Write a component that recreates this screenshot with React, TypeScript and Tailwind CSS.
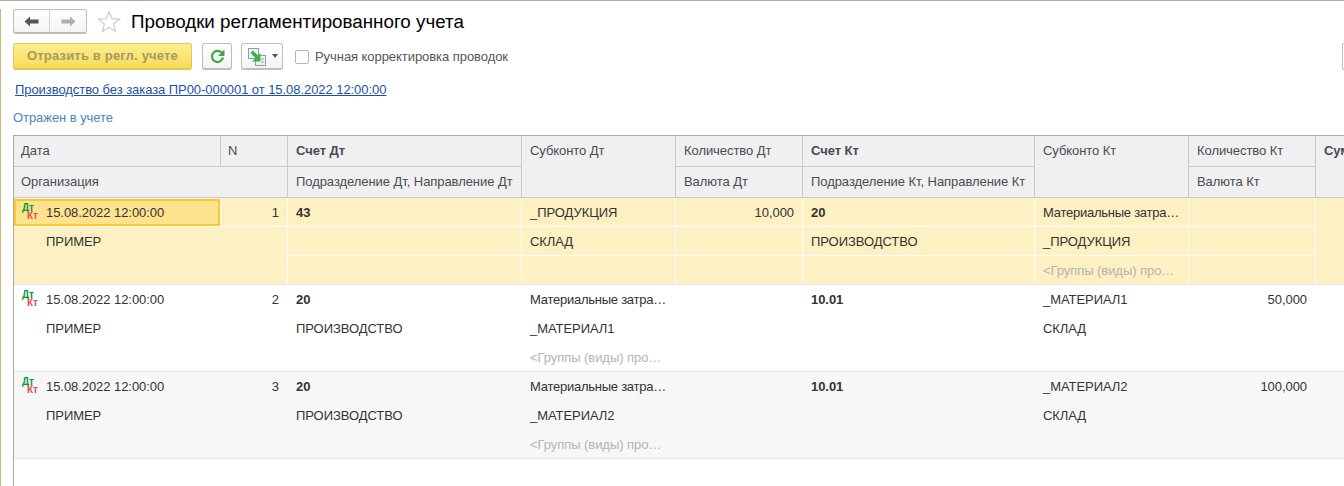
const GRID = 'grid grid-cols-[206px_66px_233px_153px_126px_231px_153px_126px_1fr] gap-x-px'

function DtKt({ inset }: { inset?: boolean }) {
  return (
    <span className={`absolute flex w-[20px] flex-col text-[10px] font-bold leading-[8px] tracking-normal ${inset ? 'left-[6px] top-[3px]' : 'left-[8px] top-[6px]'}`}>
      <span className="text-[#009a44]">Дт</span>
      <span className="pl-[5px] text-[#e2504a]">Кт</span>
    </span>
  )
}

function Arrow({ color, flip }: { color: string; flip?: boolean }) {
  return (
    <svg width="15" height="11" viewBox="0 0 15 11" className={flip ? 'rotate-180' : ''}>
      <path d="M0.5 5.5 L6 0.5 V3.5 H14.5 V7.5 H6 V10.5 Z" fill={color} />
    </svg>
  )
}

function HeadCell({ text, bold, className = '' }: { text: string; bold?: boolean; className?: string }) {
  return (
    <div className={`h-[30px] overflow-hidden whitespace-nowrap bg-[#f0f0f0] leading-[29px] text-[#4b4b55] ${bold ? 'font-bold' : ''} ${className || 'pl-[8px]'}`}>
      {text}
    </div>
  )
}

type Row = {
  n: number
  debit: string
  division: string
  sub1: string
  sub2: string
  sub3: string
  qtyDt: string
  credit: string
  divisionKt: string
  subKt1: string
  subKt2: string
  subKt3: string
  qtyKt: string
}

const rows: Row[] = [
  {
    n: 1, debit: '43', division: '', sub1: '_ПРОДУКЦИЯ', sub2: 'СКЛАД', sub3: '', qtyDt: '10,000',
    credit: '20', divisionKt: 'ПРОИЗВОДСТВО', subKt1: 'Материальные затра…', subKt2: '_ПРОДУКЦИЯ',
    subKt3: '<Группы (виды) про…', qtyKt: '',
  },
  {
    n: 2, debit: '20', division: 'ПРОИЗВОДСТВО', sub1: 'Материальные затра…', sub2: '_МАТЕРИАЛ1',
    sub3: '<Группы (виды) про…', qtyDt: '', credit: '10.01', divisionKt: '', subKt1: '_МАТЕРИАЛ1', subKt2: 'СКЛАД',
    subKt3: '', qtyKt: '50,000',
  },
  {
    n: 3, debit: '20', division: 'ПРОИЗВОДСТВО', sub1: 'Материальные затра…', sub2: '_МАТЕРИАЛ2',
    sub3: '<Группы (виды) про…', qtyDt: '', credit: '10.01', divisionKt: '', subKt1: '_МАТЕРИАЛ2', subKt2: 'СКЛАД',
    subKt3: '', qtyKt: '100,000',
  },
]

function Cell({ text, bold, right, bg }: { text: string; bold?: boolean; right?: boolean; bg: string }) {
  const muted = text.startsWith('<')
  const clipped = text.endsWith('…') && !muted
  return (
    <div
      className={`h-[28px] overflow-hidden whitespace-nowrap leading-[30px] ${bg} ${right ? 'pr-[8px] text-right' : 'pl-[8px]'} ${bold ? 'font-bold' : ''} ${muted ? 'text-[#b4b4b4]' : ''} ${clipped ? 'tracking-[-0.25px]' : ''}`}
    >
      {text}
    </div>
  )
}

function TableRow({ row, selected, bg, gapBg }: { row: Row; selected?: boolean; bg: string; gapBg: string }) {
  const columns = [
    [row.debit, row.division, ''],
    [row.sub1, row.sub2, row.sub3],
    [row.qtyDt, '', ''],
    [row.credit, row.divisionKt, ''],
    [row.subKt1, row.subKt2, row.subKt3],
    [row.qtyKt, '', ''],
  ]
  return (
    <div className={`${GRID} border-b border-[#e3e3e3] ${gapBg}`}>
      <div className="col-span-2 grid grid-cols-[206px_66px] gap-px">
        {selected ? (
          <div className="relative mt-px h-[27px] border-2 border-[#fbc92c] bg-[#fee38f] pl-[30px] leading-[24px]">
            <DtKt inset />
            15.08.2022 12:00:00
          </div>
        ) : (
          <div className={`relative h-[28px] pl-[32px] leading-[30px] ${bg}`}>
            <DtKt />
            15.08.2022 12:00:00
          </div>
        )}
        <div className={`h-[28px] pr-[8px] text-right leading-[30px] ${bg}`}>{row.n}</div>
        <div className={`col-span-2 h-[57px] pl-[32px] leading-[30px] ${bg}`}>ПРИМЕР</div>
      </div>
      {columns.map((cells, c) => (
        <div key={c} className="flex flex-col gap-y-px">
          {cells.map((text, i) => (
            <Cell
              key={i}
              text={text}
              bg={bg}
              bold={(c === 0 || c === 3) && i === 0}
              right={c === 2 || c === 5}
            />
          ))}
        </div>
      ))}
      <div className={bg} />
    </div>
  )
}

export default function App() {
  return (
    <div className="h-[486px] w-[1344px] overflow-hidden border-t border-[#a8a8a8] bg-white font-['Liberation_Sans',Arial,sans-serif] text-[13px] tracking-[-0.06px] text-[#333]">
      <div className="h-[485px] border-l border-[#c8bc7a] pl-[12px]">
        {/* title */}
        <div className="mt-[8px] flex h-[25px] items-center">
          <div className="flex h-[25px] w-[74px] rounded-[3px] border border-b-2 border-[#bdbdbd] bg-gradient-to-b from-white to-[#f4f4f4]">
            <div className="flex w-[36px] items-center justify-center border-r border-[#d0d0d0]">
              <Arrow color="#555" />
            </div>
            <div className="flex flex-1 items-center justify-center">
              <Arrow color="#adadad" flip />
            </div>
          </div>
          <svg width="24" height="23" viewBox="0 0 24 23" className="ml-[10px]">
            <path d="M12 1.5 L14.9 8.6 L22.5 9.1 L16.6 14 L18.5 21.5 L12 17.4 L5.5 21.5 L7.4 14 L1.5 9.1 L9.1 8.6 Z" fill="#fff" stroke="#c9ced3" strokeWidth="1.2" />
          </svg>
          <h1 className="ml-[10px] text-[18.8px] leading-[25px] tracking-normal text-black">Проводки регламентированного учета</h1>
        </div>

        {/* toolbar */}
        <div className="mt-[9px] flex h-[27px] items-center">
          <button className="h-[27px] w-[179px] rounded-[3px] border border-b-2 border-[#dcc95a] bg-gradient-to-b from-[#fdee8e] to-[#f7dc55] font-bold tracking-[0.18px] text-[#a39a66]">
            Отразить в регл. учете
          </button>
          <button className="ml-[10px] flex h-[27px] w-[30px] items-center justify-center rounded-[3px] border border-b-2 border-[#bdbdbd] bg-gradient-to-b from-white to-[#f4f4f4]">
            <svg width="15" height="15" viewBox="0 0 13 13">
              <path d="M10 3.2 A4.8 4.8 0 1 0 11.2 7.4" fill="none" stroke="#3ea63a" strokeWidth="1.9" />
              <path d="M12.5 0.5 V6 H7 Z" fill="#3ea63a" />
            </svg>
          </button>
          <button className="ml-[9px] flex h-[27px] w-[42px] items-center rounded-[3px] border border-b-2 border-[#bdbdbd] bg-gradient-to-b from-white to-[#f4f4f4] pl-[5px]">
            <svg width="20" height="19" viewBox="0 0 20 19">
              <rect x="1.5" y="1.5" width="10" height="10" fill="#eef2f3" stroke="#8f9ea4" />
              <rect x="8.5" y="8.5" width="10" height="10" fill="#f2f2f2" stroke="#8f9ea4" />
              <path d="M14 12 H17 M14 15 H17" stroke="#8f9ea4" />
              <path d="M3.5 6 L6 3.5 L11 8.5 L13.5 6 V14.5 H5 L8.5 11 Z" fill="#37b54a" />
            </svg>
            <span className="ml-[5px] h-0 w-0 border-x-[3.5px] border-t-[4px] border-x-transparent border-t-[#555]" />
          </button>
          <span className="ml-[12px] h-[14px] w-[14px] rounded-[2px] border border-[#b5b5b5] bg-white" />
          <span className="ml-[6px] text-[#555]">Ручная корректировка проводок</span>
          <span className="ml-auto h-[27px] w-[2px] rounded-l-[3px] border-y border-l border-[#bdbdbd]" />
        </div>

        <div className="mt-[10px] h-[20px] pl-[2px] leading-[20px]">
          <a className="text-[#1c4fa8] underline">Производство без заказа ПР00-000001 от 15.08.2022 12:00:00</a>
        </div>
        <div className="mt-[8px] h-[20px] leading-[20px] text-[#4a86c0]">Отражен в учете</div>

        {/* table */}
        <div className="mt-[7px] h-[400px] border-l border-t border-[#a8a8a8]">
          <div className={`${GRID} border-b border-[#c9c9c9] bg-[#c9c9c9]`}>
            <div className="col-span-2 grid grid-cols-[206px_66px] gap-px">
              <HeadCell text="Дата" className="pl-[7px]" />
              <HeadCell text="N" className="pl-[7px]" />
              <HeadCell text="Организация" className="col-span-2 pl-[7px]" />
            </div>
            <div className="flex flex-col gap-y-px">
              <HeadCell text="Счет Дт" bold />
              <HeadCell text="Подразделение Дт, Направление Дт" />
            </div>
            <HeadCell text="Субконто Дт" className="!h-auto pl-[8px]" />
            <div className="flex flex-col gap-y-px">
              <HeadCell text="Количество Дт" />
              <HeadCell text="Валюта Дт" />
            </div>
            <div className="flex flex-col gap-y-px">
              <HeadCell text="Счет Кт" bold />
              <HeadCell text="Подразделение Кт, Направление Кт" />
            </div>
            <HeadCell text="Субконто Кт" className="!h-auto pl-[8px]" />
            <div className="flex flex-col gap-y-px">
              <HeadCell text="Количество Кт" />
              <HeadCell text="Валюта Кт" />
            </div>
            <HeadCell text="Сумма" bold className="!h-auto pl-[8px]" />
          </div>
          <TableRow row={rows[0]} selected bg="bg-[#fdf0c2]" gapBg="bg-white" />
          <TableRow row={rows[1]} bg="bg-white" gapBg="bg-white" />
          <TableRow row={rows[2]} bg="bg-[#f7f7f7]" gapBg="bg-[#f7f7f7]" />
        </div>
      </div>
    </div>
  )
}
